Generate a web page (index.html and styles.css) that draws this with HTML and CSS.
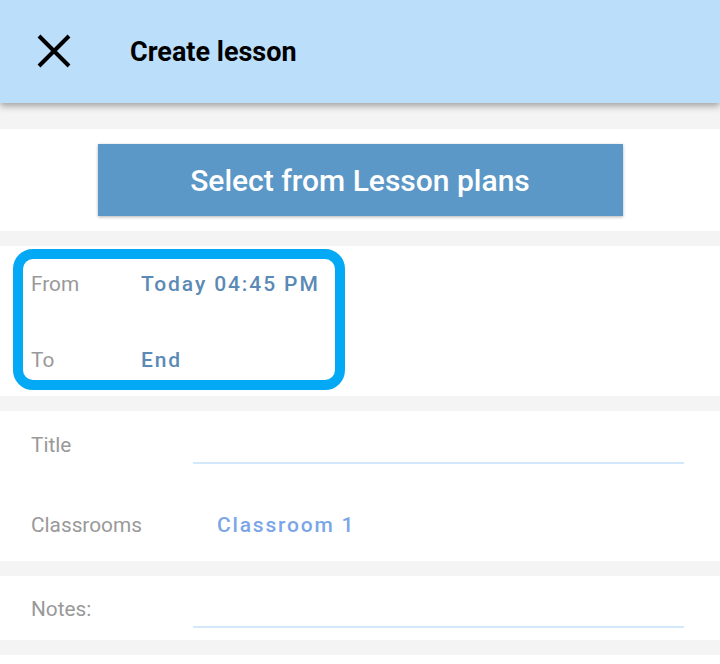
FILE: index.html
```html
<!DOCTYPE html>
<html>
<head>
<meta charset="utf-8">
<link rel="stylesheet" href="styles.css">
</head>
<body>
<header class="topbar">
  <svg class="close" width="34" height="34" viewBox="0 0 34 34"><path d="M2 2 L32 32 M32 2 L2 32" stroke="#000" stroke-width="4" fill="none"/></svg>
  <h1 class="title">Create lesson</h1>
</header>
<main class="content">
  <section class="card card-button">
    <button class="plans-btn">Select from Lesson plans</button>
  </section>
  <section class="card card-time">
    <div class="highlight">
      <div class="time-row"><span class="label">From</span><span class="value">Today 04:45 PM</span></div>
      <div class="time-row"><span class="label">To</span><span class="value">End</span></div>
    </div>
  </section>
  <section class="card card-info">
    <div class="field-row">
      <span class="label">Title</span>
      <div class="input-line"></div>
    </div>
    <div class="field-row row-class">
      <span class="label">Classrooms</span>
      <span class="classroom">Classroom 1</span>
    </div>
  </section>
  <section class="card card-notes">
    <div class="field-row">
      <span class="label">Notes:</span>
      <div class="input-line"></div>
    </div>
  </section>
  <section class="card card-rest"></section>
</main>
</body>
</html>
```
FILE: styles.css
```css
* { box-sizing: border-box; }
html, body { margin: 0; padding: 0; }
body {
  background: #f4f4f4;
  font-family: Roboto, "Noto Sans", sans-serif;
  width: 720px;
  height: 664px;
  overflow: hidden;
}
.topbar {
  position: relative;
  z-index: 2;
  height: 103px;
  background: #bbdefb;
  display: flex;
  align-items: center;
  padding-left: 37px;
  box-shadow: 0 3px 7px rgba(0,0,0,0.35);
}
.close { display: block; margin-top: -1px; }
.title {
  margin: 0 0 0 59px;
  font-size: 27px;
  font-weight: 700;
  color: #000;
}
.content {
  padding-top: 26px;
  display: flex;
  flex-direction: column;
  gap: 15px;
}
.card { background: #fff; }
.card-button {
  height: 102px;
  display: flex;
  align-items: center;
  justify-content: center;
}
.plans-btn {
  width: 525px;
  height: 72px;
  border: none;
  background: #5b98c7;
  color: #fff;
  font-family: Roboto, "Noto Sans", sans-serif;
  font-size: 30px;
  font-weight: 500;
  box-shadow: 0 1px 3px rgba(0,0,0,0.3);
  padding: 0;
}
.card-time {
  height: 150px;
  padding: 3px 0 0 13px;
}
.highlight {
  width: 332px;
  height: 141px;
  border: 10px solid #03a9f4;
  border-radius: 20px;
  padding: 12px 0 0 8px;
  display: flex;
  flex-direction: column;
  gap: 50px;
}
.time-row {
  display: flex;
  align-items: center;
  height: 26px;
}
.label {
  color: #999;
  font-size: 20.8px;
  width: 110px;
}
.value {
  color: #5a8ab5;
  font-weight: 500;
  font-size: 21px;
  letter-spacing: 1.9px;
}
.card-info {
  height: 150px;
  padding: 21px 36px 0 31px;
}
.field-row {
  display: flex;
  align-items: flex-start;
}
.field-row .label {
  width: 162px;
  line-height: 26px;
  flex: none;
}
.input-line {
  flex: 1;
  height: 32px;
  border-bottom: 2px solid #d4e8fc;
}
.row-class { margin-top: 48px; }
.classroom {
  color: #7aa6e8;
  font-weight: 500;
  font-size: 21px;
  letter-spacing: 1.8px;
  line-height: 26px;
  margin-left: 24px;
}
.card-notes {
  height: 64px;
  padding: 20px 36px 0 31px;
}
.card-rest { height: 40px; }
```
